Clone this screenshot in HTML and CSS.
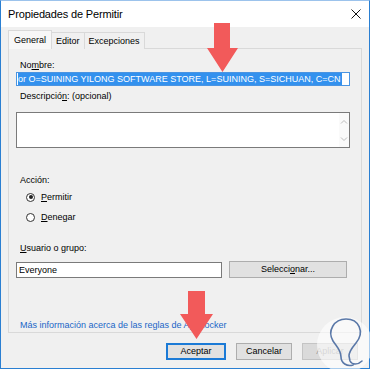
FILE: index.html
```html
<!DOCTYPE html>
<html>
<head>
<meta charset="utf-8">
<link rel="stylesheet" href="styles.css">
</head>
<body>
<div class="window">
  <div class="titlebar">
    <span class="title">Propiedades de Permitir</span>
    <svg class="close" width="10" height="10" viewBox="0 0 10 10"><path d="M0.5 0.5 L9.5 9.5 M9.5 0.5 L0.5 9.5" stroke="#111" stroke-width="1" fill="none"/></svg>
  </div>
  <div class="main">
    <div class="tabs">
      <div class="tab active">General</div>
      <div class="tab">Editor</div>
      <div class="tab">Excepciones</div>
    </div>
    <div class="panel">
      <div class="label l-nombre">No<u>m</u>bre:</div>
      <div class="field name-field"><span class="sel">or O=SUINING YILONG SOFTWARE STORE, L=SUINING, S=SICHUAN, C=CN</span></div>
      <div class="label l-desc">Descripció<u>n</u>: (opcional)</div>
      <div class="textarea">
        <div class="scroll">
          <svg width="8" height="6" viewBox="0 0 8 6"><path d="M1 4.5 L4 1.5 L7 4.5" stroke="#bdbdbd" fill="none"/></svg>
          <svg width="8" height="6" viewBox="0 0 8 6"><path d="M1 1.5 L4 4.5 L7 1.5" stroke="#bdbdbd" fill="none"/></svg>
        </div>
      </div>
      <div class="label l-accion">Acción:</div>
      <div class="radio r-permitir"><span class="dot on"></span><span><u>P</u>ermitir</span></div>
      <div class="radio r-denegar"><span class="dot"></span><span><u>D</u>enegar</span></div>
      <div class="label l-usuario"><u>U</u>suario o grupo:</div>
      <div class="user-row">
        <div class="field user-field">Everyone</div>
        <div class="btn select-btn">Selecci<u>o</u>nar...</div>
      </div>
      <div class="link">Más información acerca de las reglas de AppLocker</div>
    </div>
    <div class="buttons">
      <div class="btn default">Aceptar</div>
      <div class="btn">Cancelar</div>
      <div class="btn disabled">Aplicar</div>
    </div>
  </div>
  <svg class="arrow arrow-top" width="34" height="52" viewBox="0 0 34 52"><path d="M8 0 H24 V25 H32 L16.5 49 L1 25 H8 Z" fill="#f25a5a"/></svg>
  <svg class="arrow arrow-bottom" width="38" height="52" viewBox="0 0 38 52"><path d="M10 0 H27 V23 H35 L18.5 48 L2 23 H10 Z" fill="#f25a5a"/></svg>
  <svg class="logo" width="60" height="60" viewBox="0 0 60 60">
    <circle cx="30" cy="30" r="28" fill="rgba(255,255,255,0.6)"/>
    <path d="M18 26 C12 16 19 4 31 4 C44 4 50 17 41 28 C37 33 34 36 34 41 L35 46 C37 50 43 50 47 46 M18 26 C22 32 26 35 26 42 C26 48 32 52 38 50" stroke="#5a78a8" stroke-width="1.6" fill="none" stroke-linecap="round"/>
  </svg>
</div>
</body>
</html>
```

FILE: styles.css
```css
html, body {
  margin: 0;
  padding: 0;
}
body {
  width: 370px;
  height: 369px;
  overflow: hidden;
  font-family: "Liberation Sans", Arial, sans-serif;
  font-size: 9px;
  color: #000;
  background: #fff;
}
.window {
  position: relative;
  box-sizing: border-box;
  width: 370px;
  height: 369px;
  border: 1px solid #2a7fd2;
  border-top-color: #9cc3ec;
  background: #f0f0f0;
  display: flex;
  flex-direction: column;
}
.titlebar {
  height: 26px;
  background: #fff;
  display: flex;
  align-items: center;
  justify-content: space-between;
  padding: 0 8px 0 7px;
}
.title {
  font-size: 11px;
  letter-spacing: -0.15px;
  color: #000;
}
.close {
  margin-top: -1px;
}
.main {
  padding: 4px 7px 0 7px;
  display: flex;
  flex-direction: column;
}
.tabs {
  display: flex;
  align-items: flex-end;
  height: 18px;
  padding-left: 1px;
  margin-bottom: -1px;
  position: relative;
  z-index: 1;
}
.tab {
  box-sizing: border-box;
  height: 17px;
  line-height: 16px;
  padding: 0 4px;
  border: 1px solid #d9d9d9;
  border-bottom: none;
  background: #f0f0f0;
  margin-left: -1px;
}
.tab.active {
  height: 19px;
  line-height: 18px;
  padding: 0 5px;
  background: #f7f7f7;
  border-color: #d9d9d9;
}
.panel {
  box-sizing: border-box;
  height: 285px;
  border: 1px solid #d9d9d9;
  background: #f0f0f0;
  padding: 0 11px 0 7px;
  display: flex;
  flex-direction: column;
}
.label {
  line-height: 11px;
  height: 11px;
  padding-left: 4px;
}
.l-nombre { margin-top: 11px; }
.field {
  box-sizing: border-box;
  height: 16px;
  border: 1px solid #7a7a7a;
  background: #fff;
  line-height: 14px;
  padding-left: 1px;
  white-space: nowrap;
  overflow: hidden;
}
.name-field {
  margin-top: 1px;
  height: 14px;
  line-height: 12px;
  border-color: #4a94e2;
}
.sel {
  display: inline-block;
  background: #3391ee;
  color: #fff;
  height: 12px;
  padding-right: 2px;
}
.l-desc { margin-top: 5px; }
.textarea {
  box-sizing: border-box;
  margin-top: 10px;
  height: 36px;
  border: 1px solid #7a7a7a;
  background: #fff;
  display: flex;
  justify-content: flex-end;
}
.scroll {
  width: 10px;
  display: flex;
  flex-direction: column;
  justify-content: space-between;
  align-items: center;
  padding: 6px 0 5px;
  background: #fafafa;
}
.scroll svg { display: block; }
.l-accion { margin-top: 27px; }
.radio {
  display: flex;
  align-items: center;
  height: 12px;
  padding-left: 10px;
  gap: 6px;
}
.r-permitir { margin-top: 5px; }
.r-denegar { margin-top: 8px; }
.dot {
  box-sizing: border-box;
  width: 9px;
  height: 9px;
  border: 1px solid #333;
  border-radius: 50%;
  background: #fff;
  position: relative;
}
.dot.on::after {
  content: "";
  position: absolute;
  left: 1.5px;
  top: 1.5px;
  width: 4px;
  height: 4px;
  border-radius: 50%;
  background: #222;
}
.l-usuario { margin-top: 20px; }
.user-row {
  display: flex;
  align-items: flex-start;
  margin-top: 7px;
  gap: 7px;
}
.user-field {
  width: 206px;
  margin-top: 1px;
  padding-left: 2px;
}
.btn {
  box-sizing: border-box;
  height: 17px;
  border: 1px solid #adadad;
  background: #e1e1e1;
  text-align: center;
  line-height: 15px;
}
.select-btn {
  width: 118px;
}
.link {
  margin-top: 42px;
  line-height: 11px;
  padding-left: 4px;
  color: #1a66c7;
}
.buttons {
  display: flex;
  justify-content: flex-end;
  gap: 10px;
  margin-top: 10px;
  padding-right: 4px;
}
.buttons .btn {
  width: 56px;
}
.buttons .btn.default {
  width: 60px;
  border: 1px solid #1b7ad6;
  box-shadow: inset 0 0 0 1px #1b7ad6;
}
.buttons .btn.disabled {
  color: #9a9a9a;
  border-color: #c4c4c4;
  background: #dadada;
}
.arrow {
  position: absolute;
}
.arrow-top {
  left: 205px;
  top: 22px;
}
.arrow-bottom {
  left: 177px;
  top: 290px;
}
.logo {
  position: absolute;
  left: 314px;
  top: 314px;
}
```
